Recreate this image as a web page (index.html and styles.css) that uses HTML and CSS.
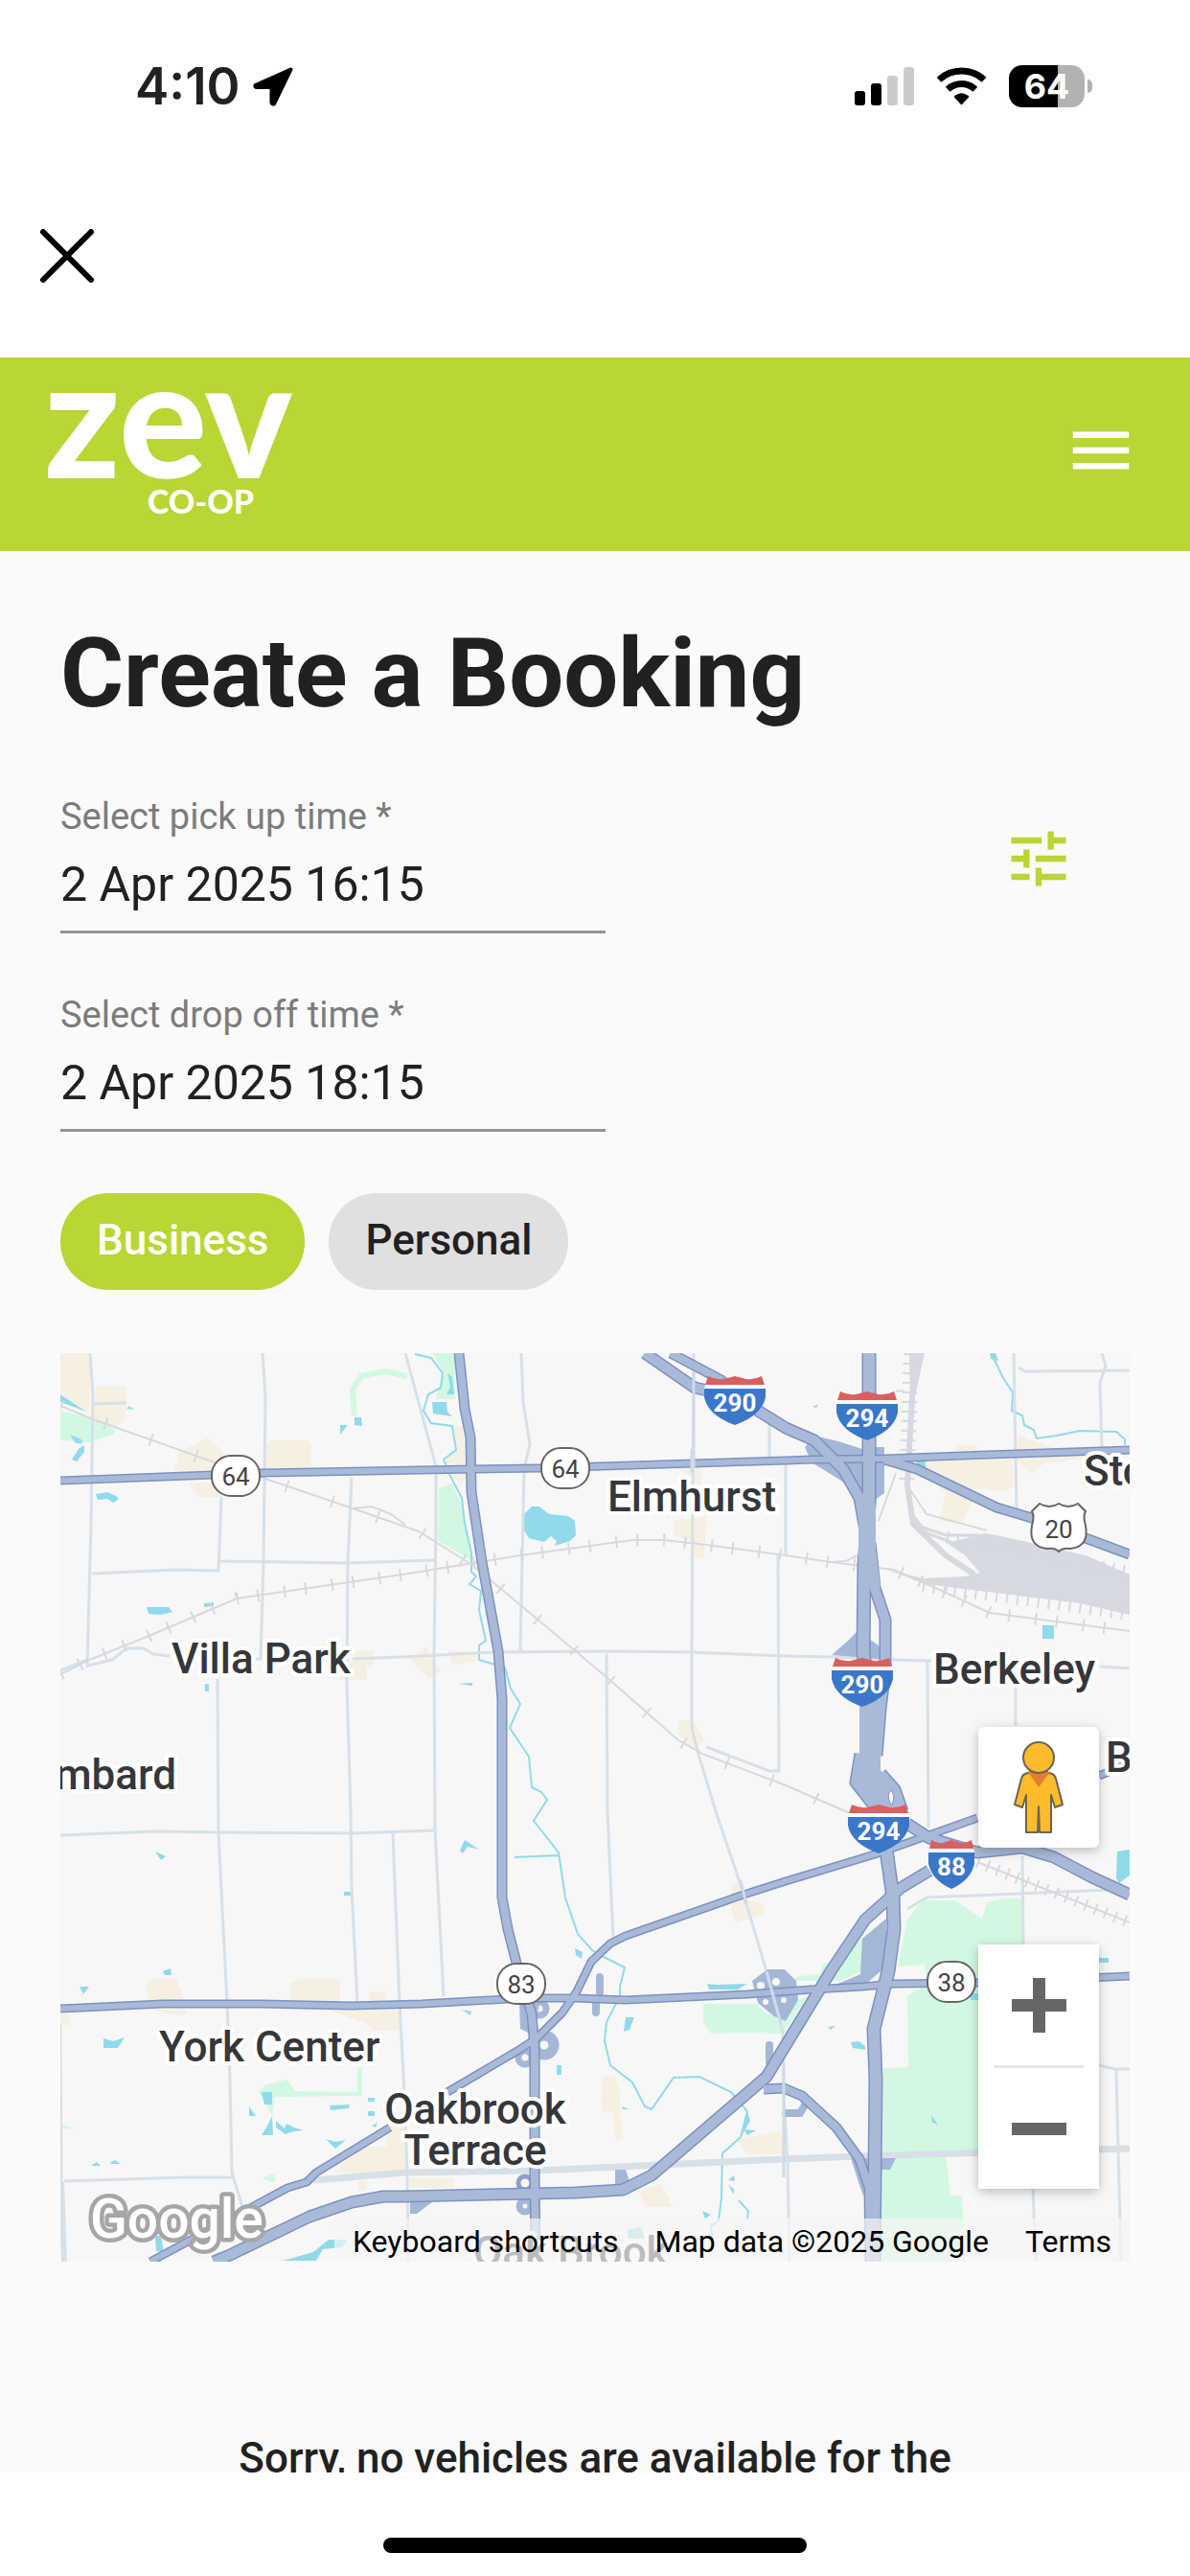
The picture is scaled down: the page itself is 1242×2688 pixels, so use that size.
FILE: index.html
```html
<!DOCTYPE html>
<html lang="en">
<head>
    <meta charset="UTF-8">
    <meta name="viewport" content="width=device-width, initial-scale=1.0">
    <title>Create a Booking</title>
    <link rel="stylesheet" href="styles.css">
</head>
<body>
    <!-- Status bar -->
    <div class="status-bar">
        <div class="status-left">
            <span class="time">4:10</span>
            <svg class="location" viewBox="0 0 42 41" width="42" height="41"><path d="M39.500 2.500L2.500 19Q2 21 4 21H19.500V37Q20 39 22 38.500Z" stroke="#000" stroke-width="4" stroke-linejoin="round"/></svg>
        </div>
        <div class="status-right">
            <svg viewBox="0 0 62 40" width="62" height="40">
                <rect x="0" y="25" width="11" height="15" rx="3"/>
                <rect x="17" y="17" width="11" height="23" rx="3"/>
                <rect x="34" y="9" width="11" height="31" rx="3" fill="#cbcbcb"/>
                <rect x="51" y="0" width="11" height="40" rx="3" fill="#cbcbcb"/>
            </svg>
            <svg viewBox="0 0 53 40" width="53" height="40" fill="none" stroke="#000" stroke-width="7">
                <path d="M3 13.300A34.500 34.500 0 0 1 50 13.300"/>
                <path d="M12.200 23.200A21 21 0 0 1 40.800 23.200"/>
                <path d="M18.500 31Q26.500 23.500 34.500 31L26.500 39.500Z" fill="#000" stroke="none"/>
            </svg>
            <div class="battery"><span>64</span></div>
            <div class="battery-tip"></div>
        </div>
    </div>

    <div class="browser-bar">
        <button class="close" aria-label="Close">
            <svg viewBox="0 0 56 56" width="56" height="56"><path d="M3 3L53 53M53 3L3 53" stroke="#000" stroke-width="6" stroke-linecap="round"/></svg>
        </button>
    </div>

    <!-- Header -->
    <header class="header">
        <a class="logo" href="#" aria-label="zev co-op">
            <span class="logo-name">zev</span>
            <span class="logo-sub">CO-OP</span>
        </a>
        <button class="menu" aria-label="Menu">
            <svg viewBox="0 0 24 24" width="78" height="78" fill="#fff"><path d="M3 18h18v-2H3v2zm0-5h18v-2H3v2zm0-7v2h18V6H3z"/></svg>
        </button>
    </header>

    <main class="content">
        <h1>Create a Booking</h1>

        <form class="booking-form">
            <div class="fields">
                <div class="field">
                    <label for="pickup">Select pick up time *</label>
                    <input type="text" id="pickup" value="2 Apr 2025 16:15">
                </div>
                <div class="field">
                    <label for="dropoff">Select drop off time *</label>
                    <input type="text" id="dropoff" value="2 Apr 2025 18:15">
                </div>
            </div>
            <button type="button" class="filter" aria-label="Filters">
                <svg viewBox="0 0 24 24" width="76" height="76" fill="#b8d634"><path d="M3 17v2h6v-2H3zM3 5v2h10V5H3zm10 16v-2h8v-2h-8v-2h-2v6h2zM7 9v2H3v2h4v2h2V9H7zm14 4v-2H11v2h10zm-6-4h2V7h4V5h-4V3h-2v6z"/></svg>
            </button>
        </form>

        <div class="chips">
            <button class="chip chip-active" aria-pressed="true">Business</button>
            <button class="chip" aria-pressed="false">Personal</button>
        </div>

        <!-- Map -->
        <div class="map">
            <svg class="map-canvas" viewBox="0 0 1116 948" preserveAspectRatio="xMidYMid slice">
                <defs>
                    <symbol id="interstate" viewBox="0 0 64 51" overflow="visible">
                        <path d="M4 0Q12 4 20 3L32 0L44 3Q52 4 60 0L63 9H1Z" fill="#d9605f"/>
                        <path d="M1 9H63L64 13H0Z" fill="#fff"/>
                        <path d="M0 13H64V22Q60 41 32 51Q4 41 0 22Z" fill="#3a77c9"/>
                    </symbol>
                    <symbol id="interstate-small" viewBox="0 0 48 51" overflow="visible">
                        <path d="M3 0Q9 4 15 3L24 0L33 3Q39 4 45 0L47 9H1Z" fill="#d9605f"/>
                        <path d="M1 9H47L48 13H0Z" fill="#fff"/>
                        <path d="M0 13H48V25Q44 42 24 51Q4 42 0 25Z" fill="#3a77c9"/>
                    </symbol>
                </defs>

                <!-- built-up areas -->
                <path class="area" d="M0 0H31V64L0 42ZM37 34H68L70 51 67 71 57 78 34 70ZM124 103L154 88 170 103 164 125H119ZM134 135H167V150H144ZM215 95L220 91H258L262 95V120H215ZM310 310H327V327L320 328V341H290ZM412 76H420L423 116H400L412 101ZM409 126H424L418 138ZM364 318L382 306 390 325 399 330 385 340ZM404 310L435 313V321L410 326ZM642 120H670L667 138 655 128ZM640 175L675 170 672 215 662 213 657 195 640 191ZM645 383H660L672 403 662 413 645 398ZM904 113L994 110 995 140 984 144 957 141 950 158 940 178 917 175 924 148 904 125ZM934 96H957V102H934ZM1000 85L1027 95 1070 110 1027 115 1014 125 997 111ZM90 658L97 653H121L130 676H92ZM97 685H132L130 691H119ZM240 657L250 653H292V676H241ZM282 686H354L353 707H327L320 700ZM322 666H340V676H322ZM285 855L314 828H340L344 805H360V855ZM310 863H320V873H312ZM0 690H9V701H0ZM364 861H411V871H364ZM565 755H578L584 771V791L587 820 579 821 577 793 564 791ZM604 875L627 866 639 891H610ZM700 555L710 551 713 570 735 575 734 585 705 595 700 581ZM705 820L755 811V836H717Z"/>

                <!-- parks -->
                <path class="park" d="M0 60L34 68 58 80 55 85 30 93 0 91ZM389 0H412V48H392L399 21ZM395 141L409 136 419 158 429 216 394 196ZM207 771L215 763 237 758 245 770 310 771V745H315V775L224 776 221 795ZM210 861L224 855V866ZM671 679H727L754 708 679 710 671 698ZM900 571H934L962 590 967 573 984 569H1004L1005 616V835H924L929 879H941L945 948H855L859 746 885 745 884 671 904 658 902 638 874 640 884 591ZM837 610L862 590 860 615 847 641 814 655H764L770 650 793 648 796 637 815 634ZM737 690L757 690 770 675 780 671 754 710 737 710ZM1 805L16 809H1Z"/>
                <path d="M307 65L305 38 314 24 339 19 362 24" fill="none" stroke="#d3f8e2" stroke-width="6"/>

                <!-- water -->
                <path class="water" d="M0 43L27 61 0 51ZM10 85L22 90 23 94H16ZM25 96V103L17 113 12 111 19 100ZM69 58L72 55 77 59ZM292 75H300L292 85ZM307 67H314L315 76 307 75ZM37 147L49 145 60 150V153L55 156 49 152 39 153ZM90 265H113L117 270 105 273 92 272ZM150 261L160 260V264L150 265ZM151 345H155V353H151ZM388 51H403L404 61 409 66 389 63ZM404 21L409 25 411 43H403L407 35ZM484 168L492 160H500L510 168 530 170 537 175 538 190 532 196 516 201 518 196 512 191 505 197 489 193 484 185ZM415 345L430 344V347ZM893 112H903V122H896ZM1025 284H1037V298H1025ZM99 520L110 525 105 529ZM296 562H303V566H296ZM20 661H30L24 669ZM107 645L115 642 116 649H109ZM45 715L55 718 67 714 60 725H45ZM210 771H221V784H213ZM197 786L204 796H197ZM221 796L222 816H210L215 808ZM225 801L234 809 236 804 244 808 254 811 244 812 235 815 225 808ZM281 785L302 784 301 788 282 790ZM321 777H328V781H321ZM321 791H328V796H321ZM325 806L331 803 329 808ZM277 820L287 823 298 821 287 830ZM33 847L38 844 42 848H33ZM51 845L57 842 63 846H55ZM232 947L264 938 280 925 300 925 294 933 274 935 267 947ZM99 921H105L108 938 100 937ZM417 519L422 508 437 518 425 515 420 522ZM537 621L545 625 544 632 538 628ZM419 685L429 687 428 691ZM590 693H599L594 706 588 708ZM518 743H523V753H518ZM675 658L685 659 717 658 707 664H677ZM586 786L594 789H587ZM717 791L720 801 710 818 714 800ZM713 810L726 811 717 816ZM697 863L703 858 704 864ZM697 868L703 872V878ZM670 895L679 899 673 903ZM1103 520L1116 518V545L1105 553 1102 548ZM825 719L833 718 840 723V727L827 725ZM801 703L809 702 804 706ZM1084 631H1094V636H1084ZM950 668H958V675H950ZM909 795L916 805 910 803ZM970 0H976L979 8 971 6ZM785 56L791 53 789 57ZM591 915L606 912 610 924H593Z"/>
                <path class="stream" d="M370 1L387 5 399 21 397 36 384 43 379 60 387 73 409 76 413 101 400 111 407 128 419 151 422 178 429 208 429 228 434 233 427 241 439 248 437 268 444 300 437 305 437 320 464 328 470 350 480 366 469 391 489 421 492 453 502 458 508 466 494 488 520 521 527 568 540 606 555 623 567 630 589 641 584 661 584 671 570 698 568 718 574 743 597 761 610 786 617 789 640 756 667 755 700 771 717 791 710 818 691 835 690 881 687 905 679 911 680 921M474 526L520 524M972 1L984 26 994 41 993 60 1004 65 1006 75 1016 80 1019 89 1040 86 1064 81 1102 82 1111 90V96M708 884L718 895 717 903"/>

                <!-- streets -->
                <g class="street">
                    <path d="M31 0L34 45 32 178 28 326 54 320 69 308H87L97 314 114 316M0 331L28 320M33 230L120 226 165 227 168 150M167 217L300 219 390 216M211 0L214 45 212 218 209 319H204M34 53L69 52M304 130L300 218 299 345 303 478 304 558 310 678M164 340L165 501 174 678 177 758 179 855 190 891"/>
                    <path d="M305 319L357 317 454 312 574 311 657 312 757 316 804 317 870 320 909 321M1085 327L1116 329M360 0L392 118V178L390 311 391 498 400 671M481 0L483 51 490 95 484 121 480 311M661 0L659 311V391L665 415 684 478 710 555 740 655 754 708 755 775 759 845 761 948M570 313L571 478 577 610M749 211L750 436H740L674 411M740 61V110M757 116V211"/>
                    <path d="M995 0L998 165M997 350V389M1000 15L1007 19 1116 18M1087 0L1091 13 1085 31 1087 100M905 321L906 495M0 503L100 499 167 500 304 501 391 498M347 501L354 678 359 771 362 858 363 948M0 700L1 865M4 864L130 860H180M1004 525L1005 616M884 580L904 568 1094 560M1084 743L1100 747H1116M1102 748L1107 948M1015 871L1018 948"/>
                    <path d="M1 865L4 948" stroke-width="6"/>
                    <path d="M264 863L360 855 497 853 754 841 834 838 1116 830" stroke-width="7"/>
                </g>

                <!-- railways -->
                <g class="rail">
                    <path d="M0 55L34 69 164 115 217 132 305 162 374 186 430 221 454 241 570 338 644 403 670 418 757 451 824 480"/>
                    <path d="M0 335L28 321 90 296 184 256 260 245 357 231 480 211 597 195H630L674 200 757 211 804 218 837 222 870 226 920 248 970 271 1116 290"/>
                    <path d="M957 531L1116 594M305 162L325 160 345 168 360 179M872 125L854 175M884 138L904 168 967 185M804 218L820 217 832 211M880 39L872 40"/>
                    <path d="M895 0L889 45 884 138 890 178 924 211 954 231" stroke-width="6"/>
                    <path d="M886 0H902L892 45 887 100H883L887 50Z" fill="#d6d9df" stroke="none"/>
                    <path d="M886 165L905 188 945 203M888 178L925 190 967 190" stroke-width="3"/>
                    <path d="M925 198L967 188 1000 195 1070 211 1116 231V273L1064 261 984 251 904 241 860 225 900 235 944 233 960 229 944 211Z" fill="#d6d9df" stroke="none"/>
                    <path d="M0 55L34 69 164 115 217 132 305 162 374 186 430 221 454 241 570 338 644 403 670 418 757 451 824 480" stroke-width="13" stroke-dasharray="2 48"/>
                    <path d="M0 335L28 321 90 296 184 256 260 245 357 231 480 211 597 195H630L674 200 757 211 804 218 837 222 870 226 920 248 970 271 1116 290" stroke-width="13" stroke-dasharray="2 20 2 26"/>
                    <path d="M888 0L883 140" stroke-width="16" stroke-dasharray="2 8"/>
                    <path d="M925 192L1116 228M900 243L1116 273M957 531L1116 594" stroke-width="12" stroke-dasharray="2 9"/>
                </g>

                <!-- interchanges -->
                <g class="ramp">
                    <path d="M777 98L787 86 812 92 837 100V152L815 133 784 114ZM850 98L860 98V146L850 153ZM805 315L822 300 832 290 854 305 867 320ZM837 611L862 590V640L835 663H800L835 648ZM722 655L738 643H756L768 655 770 675 757 697 745 692 728 678ZM479 678H500L494 712 480 705ZM825 840H872L866 852H842L838 880ZM579 852L590 852 594 864 579 870ZM365 882H393L372 898H365Z"/>
                    <path d="M563 651V667M559 675V688M740 722V740M757 793H772L778 783" fill="none" stroke="#a5b7d7" stroke-width="8" stroke-linecap="round"/>
                    <g fill="none" stroke="#a5b7d7" stroke-width="7">
                        <circle cx="500" cy="684" r="7"/>
                        <circle cx="505" cy="722" r="10" stroke-width="11"/>
                        <circle cx="485" cy="735" r="7"/>
                        <circle cx="485" cy="890" r="6"/>
                        <circle cx="485" cy="866" r="7" stroke="#8a9fcb" stroke-width="5"/>
                    </g>
                    <g fill="#f7f7f7"><circle cx="731" cy="660" r="4"/><circle cx="747" cy="656" r="4"/><circle cx="736" cy="677" r="3"/><circle cx="755" cy="675" r="3"/></g>
                </g>

                <!-- highways: casing first, fill above -->
                <g class="casing">
                    <path d="M0 133L210 125 430 121 500 120 757 112 784 111 860 110 997 105 1116 101M0 684L107 679H210L304 681 377 679 484 673H537L590 675 717 669 784 664 837 661 870 658 957 657 1116 650M404 771L477 728 497 715 524 688 539 666 554 635 574 616 590 608 710 566 757 551 850 523 884 511 957 485M1084 441L1116 428M94 948L237 871 257 865 267 855 344 808" stroke-width="9"/>
                    <path d="M416 0L422 58 428 88 429 145 440 218 457 311 461 361V568L467 601 477 640 492 690 495 725V858L496 948M860 111L894 121 977 161 1014 172 1070 193 1116 210M734 768L755 767 774 775 810 808 834 841 844 871 845 948M834 418L829 448 850 475M857 438L872 455 880 478M637 0L690 28 704 41" stroke-width="11"/>
                    <path d="M610 0L662 36 704 45 757 78 787 91 817 121 834 151 840 185M884 491L907 506 957 521 1004 516 1037 526 1077 547 1116 565M907 540L877 558 840 591 804 645 737 755 617 858 587 873 537 876 357 880H337L304 886 260 901 177 941 160 948M845 198L850 245 861 278 861 330 856 371 852 420" stroke-width="13"/>
                    <path d="M844 0V158L839 220 838 311 843 361V428L858 490 869 568 870 601 864 645 849 705 851 758 849 948" stroke-width="15"/>
                </g>
                <g class="highway">
                    <path d="M0 133L210 125 430 121 500 120 757 112 784 111 860 110 997 105 1116 101M0 684L107 679H210L304 681 377 679 484 673H537L590 675 717 669 784 664 837 661 870 658 957 657 1116 650M404 771L477 728 497 715 524 688 539 666 554 635 574 616 590 608 710 566 757 551 850 523 884 511 957 485M1084 441L1116 428M94 948L237 871 257 865 267 855 344 808" stroke-width="6"/>
                    <path d="M416 0L422 58 428 88 429 145 440 218 457 311 461 361V568L467 601 477 640 492 690 495 725V858L496 948M860 111L894 121 977 161 1014 172 1070 193 1116 210M734 768L755 767 774 775 810 808 834 841 844 871 845 948M834 418L829 448 850 475M857 438L872 455 880 478M637 0L690 28 704 41" stroke-width="8"/>
                    <path d="M610 0L662 36 704 45 757 78 787 91 817 121 834 151 840 185M884 491L907 506 957 521 1004 516 1037 526 1077 547 1116 565M907 540L877 558 840 591 804 645 737 755 617 858 587 873 537 876 357 880H337L304 886 260 901 177 941 160 948M845 198L850 245 861 278 861 330 856 371 852 420" stroke-width="10"/>
                    <path d="M844 0V158L839 220 838 311 843 361V428L858 490 869 568 870 601 864 645 849 705 851 758 849 948" stroke-width="12"/>
                </g>
                <!-- merging lanes of 290 and 294 -->
                <path class="merge" d="M833 158H851V205L856 245 843 236 838 250H833ZM834 360H860L856 400V435L876 458 880 482H850L828 450 834 415Z"/>
                <path d="M866 470Q862 460 867 456Q872 462 868 471Z" fill="#f7f7f7" stroke="#7d91c0"/>
                <path d="M661 20V120M659 100V125M710 550L716 575M737 645L752 700M755 740V860" fill="none" stroke="#d0dae8" stroke-width="3"/>

                <!-- route shields -->
                <g class="interstates">
                    <use href="#interstate" x="672" y="24" width="64" height="51"/><text x="704" y="61">290</text>
                    <use href="#interstate" x="810" y="40" width="64" height="51"/><text x="842" y="77">294</text>
                    <use href="#interstate" x="805" y="318" width="64" height="51"/><text x="837" y="355">290</text>
                    <use href="#interstate" x="822" y="471" width="64" height="51"/><text x="854" y="508">294</text>
                    <use href="#interstate-small" x="906" y="508" width="48" height="51"/><text x="930" y="545">88</text>
                </g>
                <g class="routes">
                    <rect x="158" y="107" width="50" height="42" rx="20"/><text x="183" y="138">64</text>
                    <rect x="502" y="99" width="50" height="42" rx="20"/><text x="527" y="130">64</text>
                    <rect x="456" y="637" width="50" height="42" rx="20"/><text x="481" y="668">83</text>
                    <rect x="905" y="635" width="50" height="42" rx="20"/><text x="930" y="666">38</text>
                    <path d="M1022 157Q1032 163 1042 157Q1052 163 1062 157L1070 165Q1067 170 1070 180Q1074 202 1054 204Q1046 203 1042 207Q1038 203 1030 204Q1010 202 1014 180Q1017 170 1014 165Z"/><text x="1042" y="193">20</text>
                </g>

                <!-- places -->
                <g class="places">
                    <text x="571" y="165">Elmhurst</text>
                    <text x="116" y="334">Villa Park</text>
                    <text x="121" y="455" text-anchor="end">Lombard</text>
                    <text x="103" y="739">York Center</text>
                    <text x="433" y="804" text-anchor="middle">Oakbrook</text>
                    <text x="433" y="847" text-anchor="middle">Terrace</text>
                    <text x="911" y="345">Berkeley</text>
                    <text x="1068" y="138">Stone Park</text>
                    <text x="1091" y="437">Bellwood</text>
                    <text x="431" y="953">Oak Brook</text>
                </g>
                <text class="google" x="31" y="923">Google</text>
            </svg>

            <div class="map-controls">
                <button class="map-button pegman" aria-label="Street View">
                    <svg viewBox="0 0 54 96" width="54" height="96" fill="#fbbc2c" stroke="#6b6457" stroke-width="2" stroke-linejoin="round">
                        <path d="M13 34Q27 27 41 34Q44 35 45 39L52 66 44 69 40 56V95H28L27 68 26 95H14V56L10 69 2 66 9 39Q10 35 13 34Z"/>
                        <path d="M16 32H39L27 48Z" fill="#e27d2a" stroke="none"/>
                        <circle cx="27" cy="17" r="16"/>
                    </svg>
                </button>
                <div class="zoom">
                    <button class="map-button" aria-label="Zoom in">
                        <svg viewBox="0 0 57 57" width="57" height="57" fill="#666"><path d="M22 0H35V22H57V35H35V57H22V35H0V22H22Z"/></svg>
                    </button>
                    <div class="zoom-line"></div>
                    <button class="map-button" aria-label="Zoom out">
                        <svg viewBox="0 0 57 57" width="57" height="57" fill="#666"><path d="M0 22H57V35H0Z"/></svg>
                    </button>
                </div>
            </div>

            <div class="attribution">
                <button>Keyboard shortcuts</button>
                <span>Map data ©2025 Google</span>
                <a href="#">Terms</a>
            </div>
        </div>

        <p class="empty">Sorry, no vehicles are available for the</p>
    </main>

    <footer class="home-area"><div class="home-bar"></div></footer>
</body>
</html>
```

FILE: styles.css
```css
* {
    margin: 0;
    padding: 0;
    box-sizing: border-box;
}

body {
    font-family: Roboto, "Liberation Sans", sans-serif;
    height: 100vh;
    display: flex;
    flex-direction: column;
    overflow: hidden;
    background-color: #fff;
    color: #212121;
}

button {
    font-family: inherit;
    border: none;
    background: none;
    cursor: pointer;
}

svg {
    display: block;
}

/* status bar */
.status-bar {
    display: flex;
    justify-content: space-between;
    align-items: center;
    height: 180px;
    padding: 0 102px 0 141px;
    flex-shrink: 0;
}

.status-left,
.status-right {
    display: flex;
    align-items: center;
}

.status-left {
    gap: 13px;
}

.time {
    font-family: Inter, sans-serif;
    font-size: 53px;
    line-height: 60px;
    font-weight: 600;
}

.status-right {
    gap: 23px;
}

.battery {
    width: 79px;
    height: 44px;
    border-radius: 14px;
    background: linear-gradient(to right, #000 64%, #b2b2b2 64%);
    color: #fff;
    font-family: Inter, sans-serif;
    font-size: 36px;
    font-weight: 700;
    line-height: 44px;
    text-align: center;
}

.battery-tip {
    width: 5px;
    height: 14px;
    margin-left: -20px;
    border-radius: 0 5px 5px 0;
    background-color: #b2b2b2;
}

.browser-bar {
    height: 193px;
    padding: 59px 42px;
    flex-shrink: 0;
}

/* header */
.header {
    display: flex;
    justify-content: space-between;
    align-items: flex-start;
    height: 202px;
    padding: 10px 54px 0 46px;
    background-color: #b8d634;
    flex-shrink: 0;
}

.logo {
    display: flex;
    flex-direction: column;
    gap: 22px;
    color: #fff;
    text-decoration: none;
    font-family: Lato, sans-serif;
    font-weight: 900;
}

.logo-name {
    font-size: 172px;
    line-height: 100px;
}

.logo-sub {
    font-size: 34px;
    line-height: 36px;
    padding-left: 108px;
}

.menu {
    margin-top: 48px;
}

/* content */
.content {
    flex: 1;
    min-height: 0;
    overflow: hidden;
    padding: 68px 63px 0;
    background-color: #fafafa;
}

h1 {
    font-size: 101px;
    line-height: 120px;
    font-weight: 700;
    margin-bottom: 67px;
}

.booking-form {
    display: flex;
    justify-content: space-between;
    align-items: flex-start;
}

.fields {
    width: 51%;
    display: flex;
    flex-direction: column;
    gap: 63px;
}

.field {
    display: flex;
    flex-direction: column;
    gap: 19px;
}

.field label {
    font-size: 38px;
    line-height: 44px;
    color: #7c7c7c;
}

.field input {
    width: 100%;
    padding: 0 0 18px;
    border: none;
    border-bottom: 3px solid #949494;
    background: none;
    font-family: inherit;
    font-size: 50px;
    line-height: 60px;
    height: 81px;
    color: #212121;
    outline: none;
}

.filter {
    margin: 28px 57px 0 0;
}

.chips {
    display: flex;
    gap: 25px;
    margin: 64px 0 66px;
}

.chip {
    height: 101px;
    padding: 0 38px 3px;
    border-radius: 50px;
    background-color: #e0e0e0;
    color: #212121;
    font-size: 44px;
    font-weight: 500;
}

.chip-active {
    background-color: #b8d634;
    color: #fff;
}

/* map */
.map {
    position: relative;
    height: 948px;
    overflow: hidden;
    background-color: #f7f7f7;
}

.map-canvas {
    width: 100%;
    height: 100%;
}

.area {
    fill: #f6f0e2;
}

.park {
    fill: #d3f8e2;
}

.water {
    fill: #90daec;
}

.stream {
    fill: none;
    stroke: #90daec;
    stroke-width: 2;
}

.street {
    fill: none;
    stroke: #d8e0e7;
    stroke-width: 3;
}

.rail {
    fill: none;
    stroke: #d6d9df;
    stroke-width: 2;
}

.ramp {
    fill: #a5b7d7;
}

.casing,
.highway {
    fill: none;
    stroke: #7d91c0;
    stroke-linejoin: round;
}

.highway {
    stroke: #a9bad9;
}

.merge {
    fill: #a9bad9;
}

.interstates text,
.routes text {
    text-anchor: middle;
    font-size: 26px;
}

.interstates text {
    fill: #fff;
    font-weight: 700;
}

.routes rect,
.routes path {
    fill: #fff;
    stroke: #666;
    stroke-width: 2;
}

.routes text {
    fill: #444;
}

.places text {
    font-size: 44px;
    font-weight: 500;
    fill: #36373b;
    stroke: #fff;
    stroke-width: 8px;
    stroke-linejoin: round;
    paint-order: stroke;
}

.google {
    font-size: 57px;
    font-weight: 500;
    fill: #fff;
    stroke: #a6a6a6;
    stroke-width: 9px;
    stroke-linejoin: round;
    paint-order: stroke;
}

.map-controls {
    position: absolute;
    right: 32px;
    bottom: 76px;
    display: flex;
    flex-direction: column;
    gap: 101px;
}

.map-button {
    display: flex;
    justify-content: center;
    align-items: center;
    width: 126px;
    height: 126px;
    background-color: #fff;
}

.pegman,
.zoom {
    border-radius: 6px;
    background-color: #fff;
    box-shadow: 0 3px 12px rgba(0, 0, 0, 0.25);
}

.zoom-line {
    height: 3px;
    margin: 0 16px;
    background-color: #e6e6e6;
}

.attribution {
    position: absolute;
    right: 0;
    bottom: 0;
    display: flex;
    height: 45px;
    background-color: rgba(245, 245, 245, 0.7);
}

.attribution button,
.attribution span,
.attribution a {
    padding: 0 19px;
    font-size: 32px;
    line-height: 48px;
    color: #000;
    text-decoration: none;
}

.empty {
    margin-top: 179px;
    font-size: 44px;
    line-height: 52px;
    font-weight: 500;
    text-align: center;
}

/* home indicator */
.home-area {
    display: flex;
    justify-content: center;
    align-items: flex-end;
    height: 108px;
    padding-bottom: 24px;
    flex-shrink: 0;
}

.home-bar {
    width: 442px;
    height: 16px;
    border-radius: 8px;
    background-color: #000;
}
```
